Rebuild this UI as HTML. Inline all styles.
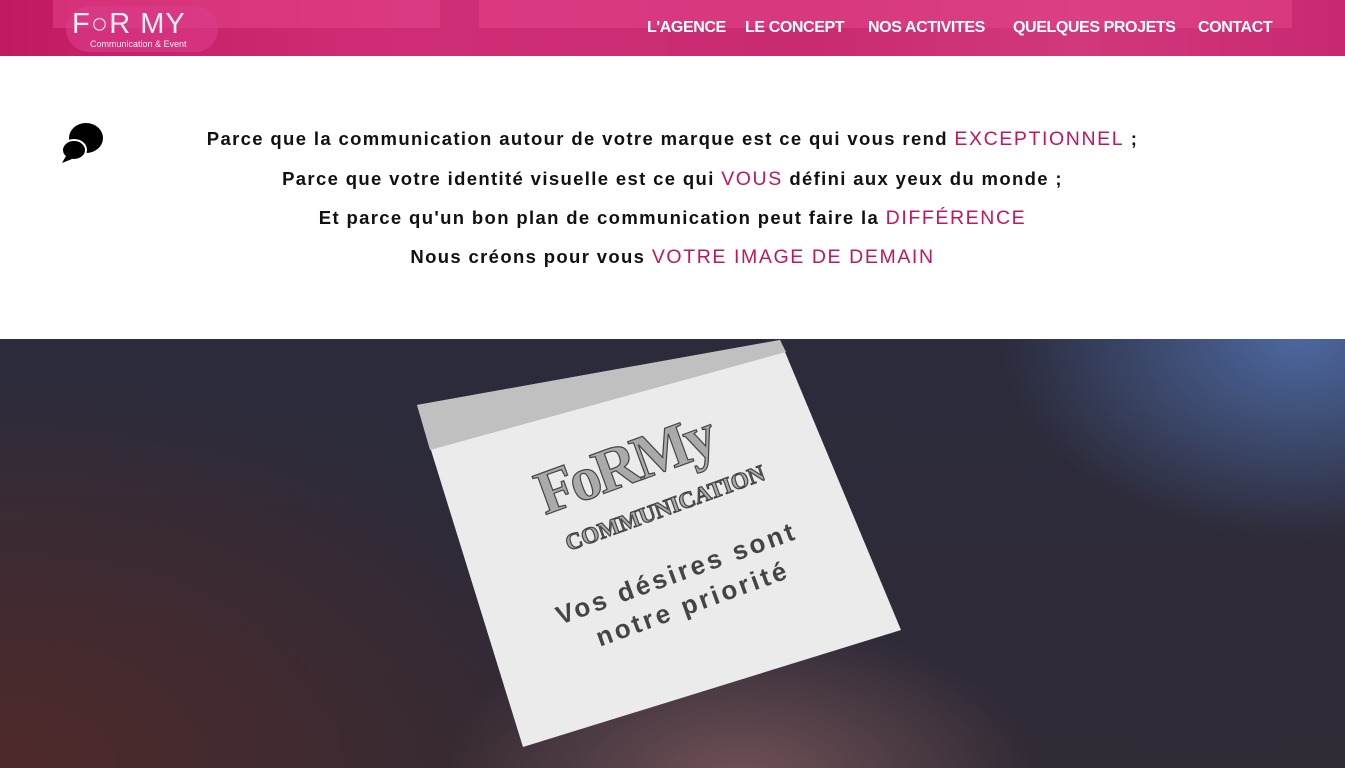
<!DOCTYPE html>
<html><head><meta charset="utf-8"><style>
*{margin:0;padding:0;box-sizing:border-box}
body{width:1345px;height:768px;overflow:hidden;background:#fff;font-family:"Liberation Sans",sans-serif;position:relative}
.hdr{position:absolute;left:0;top:0;width:1345px;height:56px;background:linear-gradient(90deg,#c21a62 0%,#cf2e76 30%,#c92a70 60%,#d2387c 80%,#c82870 100%)}
.box{position:absolute;top:0;height:28px;background:rgba(230,70,140,.5)}
.nav{position:absolute;top:19px;color:#fff;font-weight:bold;font-size:16px;letter-spacing:-.4px}
.txt{position:absolute;left:0;width:1345px;text-align:center;font-size:18.5px;font-weight:bold;color:#111;letter-spacing:1.35px}
.txt b{font-weight:normal;color:#c0175e;letter-spacing:1.6px;font-size:19.5px}
.hero{position:absolute;left:0;top:339px;width:1345px;height:429px;background:
radial-gradient(ellipse 300px 200px at 1300px 0px,rgba(80,110,170,.9),transparent),
radial-gradient(ellipse 300px 160px at 740px 440px,rgba(120,85,90,.9),transparent),
radial-gradient(ellipse 600px 400px at 0px 429px,rgba(85,42,40,.85),transparent),
linear-gradient(180deg,#2b2b3c,#302a35)}
</style></head><body>
<div class="hdr"></div>
<div class="box" style="left:53px;width:387px"></div>
<div class="box" style="left:479px;width:813px"></div>
<div style="position:absolute;left:66px;top:6px;width:152px;height:46px;border-radius:23px;background:rgba(220,60,140,.6)"></div>
<div style="position:absolute;left:72px;top:8px;color:#eee;font-size:29px;letter-spacing:1px">F<span style="color:#ddd">○</span>R MY</div>
<div style="position:absolute;left:90px;top:39px;color:#eee;font-size:9px">Communication &amp; Event</div>
<div class="nav" style="left:647px">L'AGENCE</div>
<div class="nav" style="left:745px">LE CONCEPT</div>
<div class="nav" style="left:868px">NOS ACTIVITES</div>
<div class="nav" style="left:1013px">QUELQUES PROJETS</div>
<div class="nav" style="left:1198px">CONTACT</div>
<svg style="position:absolute;left:60px;top:122px" width="46" height="44" viewBox="0 0 46 44"><ellipse cx="26" cy="16" rx="17" ry="15" fill="#000"/><path d="M14 26 L10 36 L20 29Z" fill="#000"/><ellipse cx="14" cy="28" rx="12" ry="10" fill="#000" stroke="#fff" stroke-width="2"/><path d="M6 34 L2 41 L12 37Z" fill="#000"/></svg>
<div class="txt" style="top:128px">Parce que la communication autour de votre marque est ce qui vous rend <b>EXCEPTIONNEL</b> ;</div>
<div class="txt" style="top:168px">Parce que votre identité visuelle est ce qui <b>VOUS</b> défini aux yeux du monde ;</div>
<div class="txt" style="top:207px">Et parce qu'un bon plan de communication peut faire la <b>DIFFÉRENCE</b></div>
<div class="txt" style="top:246px">Nous créons pour vous <b>VOTRE IMAGE DE DEMAIN</b></div>
<div class="hero"></div>
<svg style="position:absolute;left:0;top:0" width="1345" height="768">
<polygon points="417,405 780,340 901,630 523,747" fill="#ecebec"/>
<polygon points="417,405 780,340 786,352 430,450" fill="#c0c0c0"/>
<g transform="translate(545,515) rotate(-20)" font-family="Liberation Serif,serif" fill="#aaa" stroke="#444" stroke-width="1.2">
<text x="0" y="0" font-size="62" font-weight="bold" letter-spacing="-4">FoRMy</text>
<text x="10" y="42" font-size="23" font-weight="bold" letter-spacing="0">COMMUNICATION</text>
</g>
<g transform="translate(560,625) rotate(-20)" font-family="Liberation Sans,sans-serif" fill="#444" font-weight="bold" font-size="26" letter-spacing="3">
<text x="0" y="0">Vos désires sont</text>
<text x="30" y="34">notre priorité</text>
</g>
</svg>
</body></html>
